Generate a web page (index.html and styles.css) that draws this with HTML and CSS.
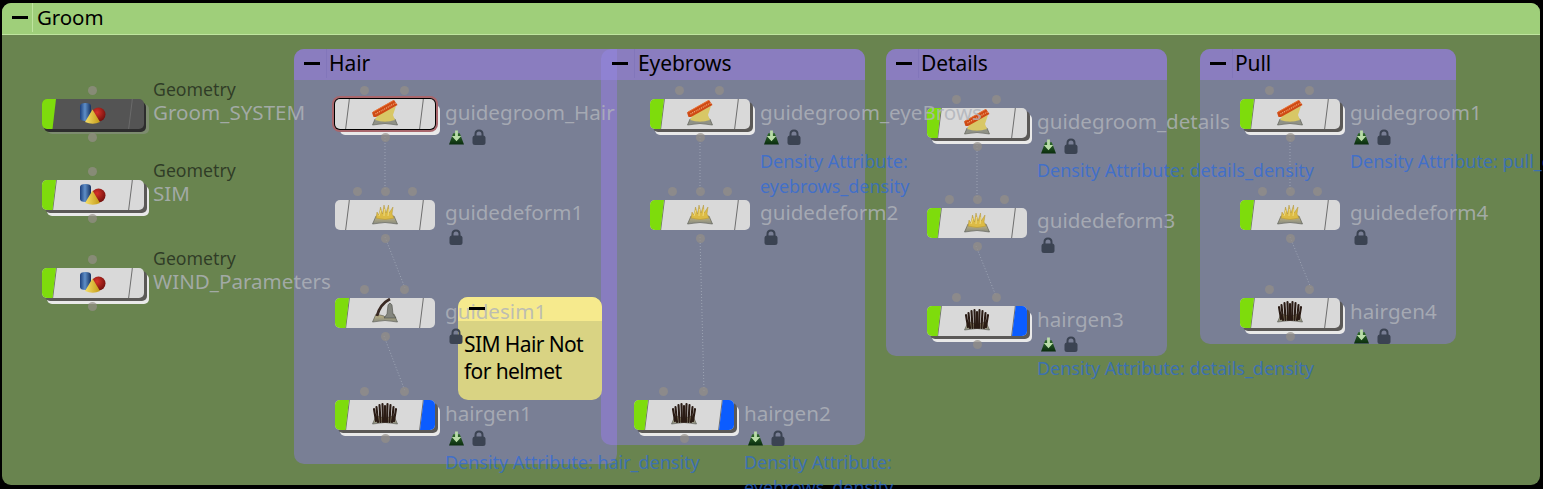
FILE: index.html
```html
<!DOCTYPE html>
<html lang="en">
<head>
    <meta charset="UTF-8">
    <title>Groom network</title>
    <link rel="stylesheet" href="styles.css">
</head>
<body>
    <svg class="defs" width="0" height="0">
        <defs>
            <linearGradient id="blueCyl" x1="0" x2="1" y1="0" y2="0">
                <stop offset="0" stop-color="#1c3f7c"/><stop offset="0.45" stop-color="#5f8fc8"/><stop offset="1" stop-color="#14305f"/>
            </linearGradient>
            <radialGradient id="redBall" cx="0.4" cy="0.35" r="0.7">
                <stop offset="0" stop-color="#d8332a"/><stop offset="1" stop-color="#6e0f0c"/>
            </radialGradient>
            <linearGradient id="yellowCone" x1="0" x2="1" y1="0" y2="0">
                <stop offset="0" stop-color="#f5df6a"/><stop offset="1" stop-color="#c49a16"/>
            </linearGradient>
            <linearGradient id="bookFill" x1="0" x2="0" y1="0" y2="1">
                <stop offset="0" stop-color="#c4b684"/><stop offset="1" stop-color="#878a80"/>
            </linearGradient>
            <linearGradient id="downFill" x1="0" x2="0" y1="0" y2="1">
                <stop offset="0" stop-color="#2f6a2c"/><stop offset="1" stop-color="#0a2c0e"/>
            </linearGradient>
        </defs>
        <symbol id="i-geo" viewBox="0 0 26 22">
            <path d="M0 3 Q0 0 5.500 0 Q11 0 11 3 V15 Q11 18 5.500 18 Q0 18 0 15Z" fill="url(#blueCyl)"/>
            <circle cx="18.500" cy="11.500" r="7" fill="url(#redBall)"/>
            <path d="M12.500 6.500 L20 19 Q13 22.500 5 19Z" fill="url(#yellowCone)"/>
        </symbol>
        <symbol id="i-book" viewBox="0 0 26 26">
            <path d="M0.500 25 L4 17 L12 19 L13 20 L14 19 L22 17 L25.500 25 Q13 22 0.500 25Z" fill="url(#bookFill)" stroke="#56584f" stroke-width="0.600"/>
        </symbol>
        <symbol id="i-deform" viewBox="0 0 26 26">
            <use href="#i-book"/>
            <path d="M4 19 L5 13 L7 16 L8.500 8 L10.500 15 L12 6 L14 14 L16.500 6 L17 14 L21 8 L20 15 L22 19 Q13 22 4 19Z" fill="#dcbb45" stroke="#a98a2c" stroke-width="0.400"/>
            <path d="M7 17 L9 11 M12 17 L12.500 10 M16 17 L17 10" stroke="#f4e28e" stroke-width="0.800"/>
        </symbol>
        <symbol id="i-groom" viewBox="0 0 26 26">
            <path d="M0.500 25 L3 19 L12 21 L14 21 L23 19 L25.500 25 Q13 22 0.500 25Z" fill="#8f9186" stroke="#56584f" stroke-width="0.600"/>
            <path d="M3 20 L7 13 L16 10 L24 6 L21 15 L23 20 Q13 23.500 3 20Z" fill="#d8c766"/>
            <path d="M0 12.500 L22 0 L25.500 5 L4 17 L1.500 17Z" fill="#cf4a14"/>
            <path d="M3.500 14 L23.500 3" stroke="#f4b88c" stroke-width="1.100" stroke-dasharray="1 1"/>
            <path d="M1 12 L21.500 0.500" stroke="#e8743a" stroke-width="1"/>
        </symbol>
        <symbol id="i-sim" viewBox="0 0 26 26">
            <use href="#i-book"/>
            <path d="M5 19 Q8 7 18 2" fill="none" stroke="#3a2a24" stroke-width="2.800"/>
            <path d="M15 17 L16 8 Q18 4.500 20 8 L21 17 L24 21 H12Z" fill="#84867f" stroke="#4c4d47" stroke-width="0.600"/>
        </symbol>
        <symbol id="i-hair" viewBox="0 0 26 26">
            <use href="#i-book"/>
            <path d="M4 22 L2 10 M6 23 L4.500 8 M8.500 23 L7.500 6 M11 23 L10.500 5 M13 23 V7 M15 23 L15.500 5 M17.500 23 L18.500 6 M20 23 L21.500 8 M22 22 L24 10" fill="none" stroke="#2a1b14" stroke-width="2.100" stroke-linecap="round"/>
        </symbol>
        <symbol id="i-down" viewBox="0 0 16 16">
            <path d="M0 16 L4.500 4 H11.500 L16 16Z" fill="url(#downFill)"/>
            <path d="M6.500 1 H9.500 V7 H13 L8 12.500 L3 7 H6.500Z" fill="#b9dca8"/>
        </symbol>
        <symbol id="i-lock" viewBox="0 0 14 16">
            <path d="M3.500 7 V5 Q3.500 1.500 7 1.500 Q10.500 1.500 10.500 5 V7" fill="none" stroke="#3b4352" stroke-width="2"/>
            <rect x="0.500" y="6.500" width="13" height="9.500" rx="2.500" fill="#3b4352"/>
        </symbol>
    </svg>

    <div class="canvas">
        <section class="box box-groom">
            <header class="box-head head-groom"><i class="dash"></i><span>Groom</span></header>
        </section>

        <section class="box box-hair">
            <header class="box-head"><i class="dash"></i><span>Hair</span></header>
        </section>
        <section class="box box-eyebrows">
            <header class="box-head"><i class="dash"></i><span>Eyebrows</span></header>
        </section>
        <section class="box box-details">
            <header class="box-head"><i class="dash"></i><span>Details</span></header>
        </section>
        <section class="box box-pull">
            <header class="box-head"><i class="dash"></i><span>Pull</span></header>
        </section>

        <aside class="sticky">
            <header class="sticky-head"><i class="dash"></i></header>
            <p>SIM Hair Not<br>for helmet</p>
        </aside>

        <svg class="links" width="1543" height="489">
            <path d="M385 137 V190 M385 237 L405 288 M384 336 L405 391"/>
            <path d="M700 137 V190 M700 237 L704 391"/>
            <path d="M977 145 V198 M976 246 L996 296"/>
            <path d="M1290 137 V190 M1290 237 L1311 288"/>
        </svg>

        <!-- geometry nodes -->
        <div class="node node-dark n-system">
            <i class="port p-mid p-in"></i><i class="port p-mid p-out"></i>
            <div class="face"><b class="flag-l"></b><svg class="icon icon-geo"><use href="#i-geo"/></svg></div>
            <div class="info info-geo"><div class="type">Geometry</div><div class="name">Groom_SYSTEM</div></div>
        </div>
        <div class="node foot n-sim">
            <i class="port p-mid p-in"></i><i class="port p-mid p-out"></i>
            <div class="face"><b class="flag-l"></b><svg class="icon icon-geo"><use href="#i-geo"/></svg></div>
            <div class="info info-geo"><div class="type">Geometry</div><div class="name">SIM</div></div>
        </div>
        <div class="node foot n-wind">
            <i class="port p-mid p-in"></i><i class="port p-mid p-out"></i>
            <div class="face"><b class="flag-l"></b><svg class="icon icon-geo"><use href="#i-geo"/></svg></div>
            <div class="info info-geo"><div class="type">Geometry</div><div class="name">WIND_Parameters</div></div>
        </div>

        <!-- Hair -->
        <div class="node selected n-h1">
            <i class="port p-a p-in"></i><i class="port p-d p-in"></i><i class="port p-mid p-out"></i>
            <div class="face"><svg class="icon icon-groom"><use href="#i-groom"/></svg></div>
            <div class="info"><div class="name">guidegroom_Hair</div>
                <div class="badges"><svg class="b-down"><use href="#i-down"/></svg><svg class="b-lock"><use href="#i-lock"/></svg></div></div>
        </div>
        <div class="node n-h2">
            <i class="port p-b p-in"></i><i class="port p-mid p-in"></i><i class="port p-c p-in"></i><i class="port p-mid p-out"></i>
            <div class="face"><svg class="icon"><use href="#i-deform"/></svg></div>
            <div class="info info-up"><div class="name">guidedeform1</div>
                <div class="badges"><svg class="b-lock"><use href="#i-lock"/></svg></div></div>
        </div>
        <div class="node n-h3">
            <i class="port p-a p-in"></i><i class="port p-d p-in"></i><i class="port p-mid p-out"></i>
            <div class="face"><b class="flag-l"></b><svg class="icon"><use href="#i-sim"/></svg></div>
            <div class="info"><div class="name">guidesim1</div>
                <div class="badges"><svg class="b-lock"><use href="#i-lock"/></svg></div></div>
        </div>
        <div class="node foot n-h4">
            <i class="port p-a p-in"></i><i class="port p-d p-in"></i><i class="port p-mid p-out"></i>
            <div class="face"><b class="flag-l"></b><b class="flag-r"></b><svg class="icon"><use href="#i-hair"/></svg></div>
            <div class="info"><div class="name">hairgen1</div>
                <div class="badges"><svg class="b-down"><use href="#i-down"/></svg><svg class="b-lock"><use href="#i-lock"/></svg></div>
                <div class="density">Density Attribute: hair_density</div></div>
        </div>

        <!-- Eyebrows -->
        <div class="node foot n-e1">
            <i class="port p-a p-in"></i><i class="port p-d p-in"></i><i class="port p-mid p-out"></i>
            <div class="face"><b class="flag-l"></b><svg class="icon icon-groom"><use href="#i-groom"/></svg></div>
            <div class="info"><div class="name">guidegroom_eyeBrows</div>
                <div class="badges"><svg class="b-down"><use href="#i-down"/></svg><svg class="b-lock"><use href="#i-lock"/></svg></div>
                <div class="density">Density Attribute:<br>eyebrows_density</div></div>
        </div>
        <div class="node n-e2">
            <i class="port p-b p-in"></i><i class="port p-mid p-in"></i><i class="port p-c p-in"></i><i class="port p-mid p-out"></i>
            <div class="face"><b class="flag-l"></b><svg class="icon"><use href="#i-deform"/></svg></div>
            <div class="info info-up"><div class="name">guidedeform2</div>
                <div class="badges"><svg class="b-lock"><use href="#i-lock"/></svg></div></div>
        </div>
        <div class="node foot n-e3">
            <i class="port p-a p-in"></i><i class="port p-d p-in"></i><i class="port p-mid p-out"></i>
            <div class="face"><b class="flag-l"></b><b class="flag-r"></b><svg class="icon"><use href="#i-hair"/></svg></div>
            <div class="info"><div class="name">hairgen2</div>
                <div class="badges"><svg class="b-down"><use href="#i-down"/></svg><svg class="b-lock"><use href="#i-lock"/></svg></div>
                <div class="density">Density Attribute:<br>eyebrows_density</div></div>
        </div>

        <!-- Details -->
        <div class="node foot n-d1">
            <i class="port p-a p-in"></i><i class="port p-d p-in"></i><i class="port p-mid p-out"></i>
            <div class="face"><b class="flag-l"></b><svg class="icon icon-groom"><use href="#i-groom"/></svg></div>
            <div class="info"><div class="name">guidegroom_details</div>
                <div class="badges"><svg class="b-down"><use href="#i-down"/></svg><svg class="b-lock"><use href="#i-lock"/></svg></div>
                <div class="density">Density Attribute: details_density</div></div>
        </div>
        <div class="node n-d2">
            <i class="port p-b p-in"></i><i class="port p-mid p-in"></i><i class="port p-c p-in"></i><i class="port p-mid p-out"></i>
            <div class="face"><b class="flag-l"></b><svg class="icon"><use href="#i-deform"/></svg></div>
            <div class="info info-up"><div class="name">guidedeform3</div>
                <div class="badges"><svg class="b-lock"><use href="#i-lock"/></svg></div></div>
        </div>
        <div class="node foot n-d3">
            <i class="port p-a p-in"></i><i class="port p-d p-in"></i><i class="port p-mid p-out"></i>
            <div class="face"><b class="flag-l"></b><b class="flag-r"></b><svg class="icon"><use href="#i-hair"/></svg></div>
            <div class="info"><div class="name">hairgen3</div>
                <div class="badges"><svg class="b-down"><use href="#i-down"/></svg><svg class="b-lock"><use href="#i-lock"/></svg></div>
                <div class="density">Density Attribute: details_density</div></div>
        </div>

        <!-- Pull -->
        <div class="node foot n-p1">
            <i class="port p-a p-in"></i><i class="port p-d p-in"></i><i class="port p-mid p-out"></i>
            <div class="face"><b class="flag-l"></b><svg class="icon icon-groom"><use href="#i-groom"/></svg></div>
            <div class="info"><div class="name">guidegroom1</div>
                <div class="badges"><svg class="b-down"><use href="#i-down"/></svg><svg class="b-lock"><use href="#i-lock"/></svg></div>
                <div class="density">Density Attribute: pull_density</div></div>
        </div>
        <div class="node n-p2">
            <i class="port p-b p-in"></i><i class="port p-mid p-in"></i><i class="port p-c p-in"></i><i class="port p-mid p-out"></i>
            <div class="face"><b class="flag-l"></b><svg class="icon"><use href="#i-deform"/></svg></div>
            <div class="info info-up"><div class="name">guidedeform4</div>
                <div class="badges"><svg class="b-lock"><use href="#i-lock"/></svg></div></div>
        </div>
        <div class="node foot n-p3">
            <i class="port p-a p-in"></i><i class="port p-d p-in"></i><i class="port p-mid p-out"></i>
            <div class="face"><b class="flag-l"></b><svg class="icon"><use href="#i-hair"/></svg></div>
            <div class="info"><div class="name">hairgen4</div>
                <div class="badges"><svg class="b-down"><use href="#i-down"/></svg><svg class="b-lock"><use href="#i-lock"/></svg></div></div>
        </div>
    </div>
</body>
</html>
```

FILE: styles.css
```css
/* Network editor: everything sits on a free canvas */
:root {
    --groom-head: #9fcf7a;
    --groom-body: #69844f;
    --box-head: #8a7dbf;
    --box-body: #797f95;
    --flag-green: #7edc0c;
    --flag-blue: #0b5cff;
    --face: #d9d9d9;
}

html, body {
    margin: 0;
    height: 100%;
    background: #000;
    overflow: hidden;
}

body {
    font-family: "Noto Sans", sans-serif;
}

.defs {
    position: absolute;
}

.canvas {
    position: relative;
    width: 1543px;
    height: 489px;
    overflow: hidden;
}

/* network boxes */
.box {
    position: absolute;
    background: var(--box-body);
    border-radius: 10px;
    overflow: hidden;
}

.box-groom { left: 2px; top: 3px; width: 1538px; height: 482px; background: var(--groom-body); border-radius: 9px; }
.box-hair { left: 294px; top: 49px; width: 323px; height: 415px; }
.box-eyebrows {
    left: 601px;
    top: 49px;
    width: 264px;
    height: 396px;
    /* the strip where it lies over Hair */
    background: linear-gradient(90deg, #887dbf 16px, var(--box-body) 16px);
}
.box-details { left: 886px; top: 49px; width: 281px; height: 307px; }
.box-pull { left: 1200px; top: 49px; width: 256px; height: 295px; }

.box-head {
    display: flex;
    align-items: center;
    gap: 6px;
    box-sizing: border-box;
    height: 31px;
    padding: 0 0 2px 10px;
    background: var(--box-head);
    color: #000;
    font-size: 21px;
    letter-spacing: -0.1px;
}

.box-head span {
    padding-left: 2px;
    line-height: 29px;
    border-left: 1px solid #8276ba;
}

.box-eyebrows .box-head {
    padding-left: 11px;
    background: linear-gradient(90deg, #8f82d2 16px, var(--box-head) 16px);
}

.box-eyebrows .box-head span {
    padding-left: 3px;
}

.head-groom {
    height: 32px;
    gap: 4px;
    padding-bottom: 3px;
    border-bottom: 1px solid #bfe59f;
    background: var(--groom-head);
}

.head-groom span {
    padding-left: 4px;
    border-left-color: #bfe59f;
    font-size: 20.500px;
}

.dash {
    display: block;
    width: 16px;
    height: 3px;
    background: #000;
}

/* sticky note */
.sticky {
    position: absolute;
    left: 458px;
    top: 297px;
    width: 144px;
    height: 103px;
    background: #d9d383;
    border-radius: 10px;
    overflow: hidden;
    color: #000;
    font-size: 21px;
    line-height: 27px;
}

.sticky-head {
    display: flex;
    align-items: center;
    height: 24px;
    padding: 0 0 2px 11px;
    box-sizing: border-box;
    background: #f6ea8d;
}

.sticky .dash {
    position: relative;
    z-index: 3;
}

.sticky p {
    margin: 10px 0 0 6px;
    letter-spacing: -0.6px;
}

/* wires */
.links {
    position: absolute;
    left: 0;
    top: 0;
}

.links path {
    fill: none;
    stroke: #b4bcc8;
    stroke-opacity: 0.6;
    stroke-width: 1;
    stroke-dasharray: 1 2;
}

/* nodes */
.node {
    position: absolute;
    width: 100px;
    height: 30px;
}

.n-system { left: 42px; top: 99px; width: 102px; }
.n-sim { left: 42px; top: 180px; width: 102px; }
.n-wind { left: 42px; top: 268px; width: 102px; }
.n-h1 { left: 335px; top: 99px; }
.n-h2 { left: 335px; top: 200px; }
.n-h3 { left: 335px; top: 298px; }
.n-h4 { left: 335px; top: 400px; }
.n-e1 { left: 650px; top: 99px; }
.n-e2 { left: 650px; top: 200px; }
.n-e3 { left: 634px; top: 400px; }
.n-d1 { left: 927px; top: 108px; }
.n-d2 { left: 927px; top: 208px; }
.n-d3 { left: 927px; top: 306px; }
.n-p1 { left: 1240px; top: 99px; }
.n-p2 { left: 1240px; top: 200px; }
.n-p3 { left: 1240px; top: 298px; }

.face {
    position: relative;
    height: 100%;
    background: var(--face);
    border-radius: 5px;
    overflow: hidden;
}

.face::before,
.face::after {
    content: "";
    position: absolute;
    top: -2px;
    bottom: -2px;
    width: 1px;
    background: #6e6e6e;
    transform: skewX(-7deg);
}

.face::before { left: 12px; }
.face::after { right: 13px; }

.flag-l,
.flag-r {
    position: absolute;
    top: 0;
    bottom: 0;
    z-index: 1;
}

.flag-l {
    left: 0;
    width: 14px;
    background: var(--flag-green);
    clip-path: polygon(0 0, 100% 0, 75% 100%, 0 100%);
}

.flag-r {
    right: 0;
    width: 15px;
    background: var(--flag-blue);
    clip-path: polygon(25% 0, 100% 0, 100% 100%, 0 100%);
}

.foot .face {
    box-shadow: 3px 3px 0 #5b5957, 5px 6px 0 #e9e9e9;
}

.node-dark .face {
    background: #545454;
    box-shadow: 2px 3px 0 #2d2d2d, 5px 5px 0 rgba(150, 150, 150, 0.45);
}

.node-dark .face::before { background: transparent; }
.node-dark .face::after { background: #6b6b6b; }

.selected .face {
    box-shadow: 0 0 0 1px #000, 0 0 0 3px #a8666c, 5px 6px 0 #e9e9e9;
}

.icon {
    position: absolute;
    left: 50%;
    top: -1px;
    width: 26px;
    height: 26px;
    margin-left: -13px;
}

.icon-groom {
    top: 1px;
}

.icon-geo {
    top: 4px;
    width: 26px;
    height: 22px;
}

/* ports */
.port {
    position: absolute;
    display: block;
    width: 9px;
    height: 9px;
    margin: -0.500px;
    border-radius: 50%;
    background: rgba(148, 142, 135, 0.7);
    z-index: 1;
}

.p-in { top: -13px; }
.p-out { top: 34px; }
.p-mid { left: 46px; }
.p-a { left: 25px; }
.p-b { left: 18px; }
.p-c { left: 73px; }
.p-d { left: 65px; }

/* labels next to a node */
.info {
    position: absolute;
    left: 110px;
    top: 0;
    z-index: 2;
    white-space: nowrap;
}

.info-up {
    top: -1px;
}

.info-geo {
    top: -20px;
    left: 111px;
}

.type {
    font-size: 17.700px;
    line-height: 20px;
    color: rgba(24, 32, 22, 0.72);
}

.name {
    height: 28px;
    font-size: 20.600px;
    line-height: 26px;
    color: rgba(176, 179, 186, 0.82);
}

.badges {
    display: flex;
    align-items: center;
    gap: 8px;
    height: 16px;
    margin: 2px 0 0 4px;
}

.b-down { width: 15px; height: 16px; }
.b-lock { width: 14px; height: 16px; }

.density {
    margin-top: 4px;
    font-size: 18px;
    line-height: 25px;
    letter-spacing: -0.03px;
    color: rgba(38, 104, 226, 0.68);
}
```
